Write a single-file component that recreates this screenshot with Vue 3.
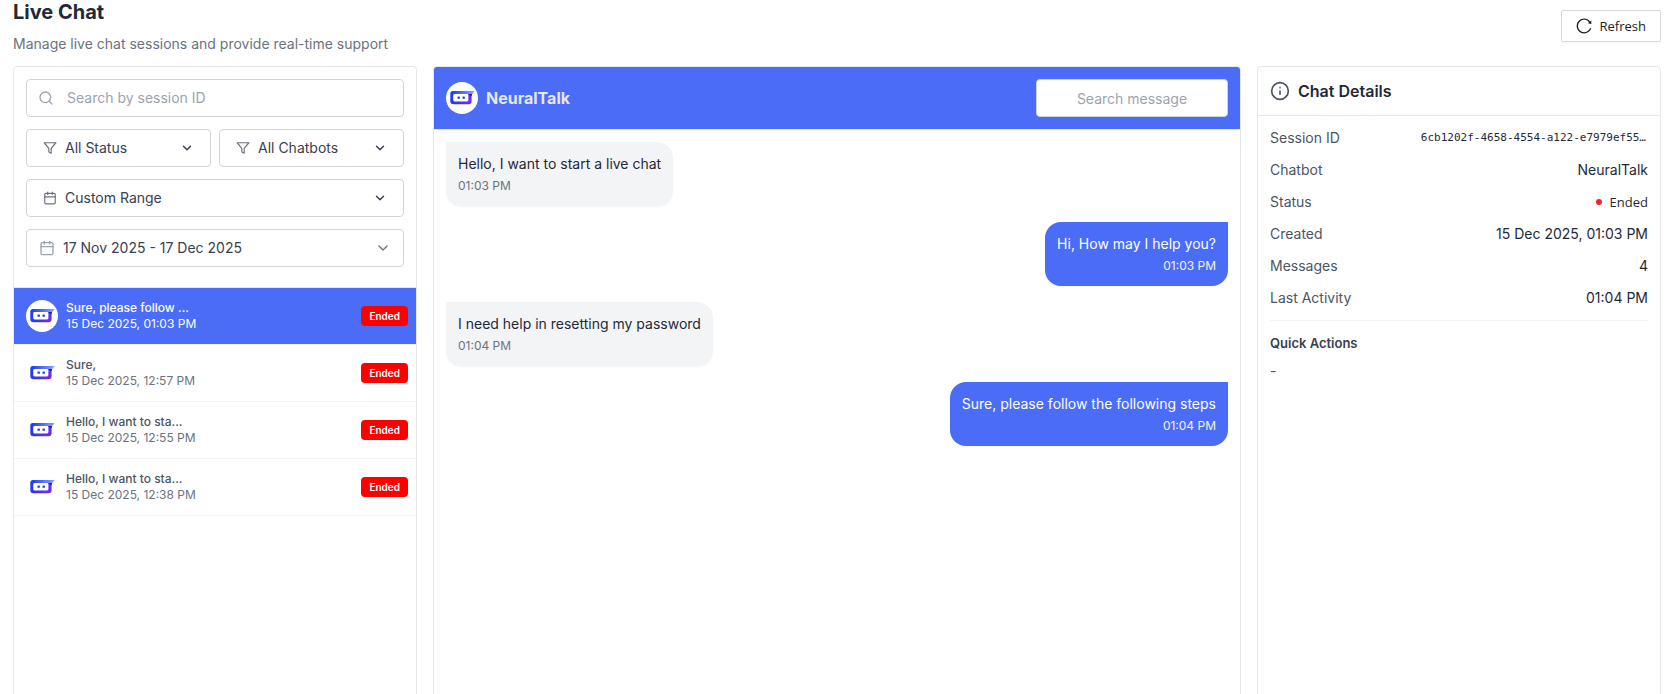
<template>
  <div class="page">
    <header class="page-header">
      <div>
        <h1 class="page-title">Live Chat</h1>
        <p class="page-subtitle">
          Manage live chat sessions and provide real-time support
        </p>
      </div>
      <button type="button" class="refresh-btn">
        <svg width="16" height="16" viewBox="64 64 896 896" fill="currentColor">
          <path
            d="M909.1 209.3l-56.4 44.1C775.8 155.1 656.2 92 521.9 92 290 92 102.3 279.5 102 511.5 101.7 743.7 289.8 932 521.9 932c181.3 0 335.8-115 394.6-276.1 1.5-4.2-.7-8.9-4.9-10.3l-56.7-19.5a8 8 0 00-10.1 4.8c-1.8 5-3.8 10-5.9 14.9-17.3 41-42.1 77.8-73.7 109.4A344.77 344.77 0 01655.9 829c-42.3 17.9-87.4 27-133.8 27-46.5 0-91.5-9.1-133.8-27A341.5 341.5 0 01279 755.2a342.16 342.16 0 01-73.7-109.4c-17.9-42.4-27-87.4-27-133.9s9.1-91.5 27-133.9c17.3-41 42.1-77.8 73.7-109.4 31.6-31.6 68.4-56.4 109.3-73.8 42.3-17.9 87.4-27 133.8-27 46.5 0 91.5 9.1 133.8 27a341.5 341.5 0 01109.3 73.8c9.9 9.9 19.2 20.4 27.8 31.4l-60.2 47a8 8 0 003 14.1l175.6 43c5 1.2 9.9-2.6 9.9-7.7l.8-180.9c-.1-6.6-7.8-10.3-13-6.2z"
          />
        </svg>
        Refresh
      </button>
    </header>

    <!-- Shared bot logo -->
    <svg class="defs" width="0" height="0" aria-hidden="true">
      <defs>
        <linearGradient id="bot-body" x1="0" y1="0" x2="1" y2="0.4">
          <stop offset="0" stop-color="#1a3cf5" />
          <stop offset="0.6" stop-color="#3a35e8" />
          <stop offset="1" stop-color="#6a2cf0" />
        </linearGradient>
        <linearGradient id="bot-top" x1="0" y1="0" x2="1" y2="0">
          <stop offset="0" stop-color="#1a3cf5" />
          <stop offset="1" stop-color="#86a4ff" />
        </linearGradient>
        <symbol id="bot-logo" viewBox="0 0 32 32">
          <path
            fill="url(#bot-body)"
            fill-rule="evenodd"
            d="M7 9.1H25.6V19a3.2 3.2 0 0 1-3.2 3.2H7.5a3.2 3.2 0 0 1-3.2-3.2V11.9A2.8 2.8 0 0 1 7 9.1ZM8.6 12a1.4 1.4 0 0 0-1.4 1.4V18a1.4 1.4 0 0 0 1.4 1.4H21a1.4 1.4 0 0 0 1.4-1.4V12Z"
          />
          <path fill="url(#bot-top)" d="M7 9.1H28.6L26.4 12H5.2A2.8 2.8 0 0 1 7 9.1Z" />
          <path fill="#2a1b9a" d="M22.4 12H26L25.6 14L22.4 12.8Z" />
          <rect x="11.5" y="14.4" width="2.4" height="2.4" rx="0.6" fill="#2438ee" />
          <rect x="16.5" y="14.4" width="2.4" height="2.4" rx="0.6" fill="#2438ee" />
        </symbol>
      </defs>
    </svg>

    <main class="columns">
      <section class="panel">
        <div class="filters">
          <label class="field search-field">
            <svg class="icon muted" width="16" height="16" viewBox="0 0 24 24">
              <circle cx="11" cy="11" r="8" />
              <path d="M21 21l-4.35-4.35" />
            </svg>
            <input
              v-model="sessionQuery"
              class="search-input"
              type="text"
              aria-label="Search by session ID"
              placeholder="Search by session ID"
            />
          </label>

          <div class="filter-row">
            <label class="field select-field">
              <svg class="icon" width="14" height="14" viewBox="0 0 24 24">
                <path d="M22 3H2l8 9.46V19l4 2v-8.54L22 3z" />
              </svg>
              <select v-model="status" aria-label="Status">
                <option>All Status</option>
                <option>Active</option>
                <option>Ended</option>
              </select>
              <svg class="icon dark" width="14" height="14" viewBox="0 0 24 24">
                <path d="M6 9l6 6 6-6" />
              </svg>
            </label>
            <label class="field select-field">
              <svg class="icon" width="14" height="14" viewBox="0 0 24 24">
                <path d="M22 3H2l8 9.46V19l4 2v-8.54L22 3z" />
              </svg>
              <select v-model="chatbot" aria-label="Chatbot">
                <option>All Chatbots</option>
                <option>NeuralTalk</option>
              </select>
              <svg class="icon dark" width="14" height="14" viewBox="0 0 24 24">
                <path d="M6 9l6 6 6-6" />
              </svg>
            </label>
          </div>

          <label class="field select-field">
            <svg class="icon" width="14" height="14" viewBox="0 0 24 24">
              <rect x="3" y="4" width="18" height="18" rx="2" />
              <path d="M16 2v4M8 2v4M3 10h18" />
            </svg>
            <select v-model="range" aria-label="Date range">
              <option>Custom Range</option>
              <option>Today</option>
            </select>
            <svg class="icon dark" width="14" height="14" viewBox="0 0 24 24">
              <path d="M6 9l6 6 6-6" />
            </svg>
          </label>

          <button type="button" class="field date-field">
            <svg class="icon muted" width="16" height="16" viewBox="0 0 24 24">
              <rect x="3" y="4" width="18" height="18" rx="2" />
              <path d="M16 2v4M8 2v4M3 10h18" />
            </svg>
            <span class="date-text">17 Nov 2025 - 17 Dec 2025</span>
            <svg class="icon" width="16" height="16" viewBox="0 0 24 24">
              <path d="M6 9l6 6 6-6" />
            </svg>
          </button>
        </div>

        <ul class="sessions">
          <li v-for="(session, index) in sessions" :key="session.date">
            <button
              type="button"
              class="session"
              :class="{ active: index === selected }"
              @click="selected = index"
            >
              <span class="avatar">
                <svg width="32" height="32"><use href="#bot-logo" /></svg>
              </span>
              <span class="session-text">
                <span class="session-title">{{ session.title }}</span>
                <span class="session-date">{{ session.date }}</span>
              </span>
              <span class="badge">Ended</span>
            </button>
          </li>
        </ul>
      </section>

      <section class="panel">
        <div class="chat-header">
          <span class="avatar">
            <svg width="32" height="32"><use href="#bot-logo" /></svg>
          </span>
          <h2 class="chat-name">NeuralTalk</h2>
          <input
            v-model="messageQuery"
            class="message-search"
            type="text"
            aria-label="Search message"
            placeholder="Search message"
          />
        </div>
        <div class="messages">
          <div
            v-for="message in messages"
            :key="message.text"
            class="bubble"
            :class="{ mine: message.mine }"
          >
            <p class="bubble-text">{{ message.text }}</p>
            <p class="bubble-time">{{ message.time }}</p>
          </div>
        </div>
      </section>

      <section class="panel">
        <div class="details-header">
          <svg class="icon info" width="20" height="20" viewBox="0 0 24 24">
            <circle cx="12" cy="12" r="10" />
            <path d="M12 16v-4M12 8h.01" />
          </svg>
          <h2 class="details-title">Chat Details</h2>
        </div>
        <div class="details-body">
          <dl class="details">
            <div v-for="item in details" :key="item.label" class="detail">
              <dt>{{ item.label }}</dt>
              <dd :class="item.kind">{{ item.value }}</dd>
            </div>
          </dl>
          <h3 class="actions-title">Quick Actions</h3>
          <p class="actions-empty">-</p>
        </div>
      </section>
    </main>
  </div>
</template>

<script setup>
import { ref } from "vue";

const sessionQuery = ref("");
const messageQuery = ref("");
const status = ref("All Status");
const chatbot = ref("All Chatbots");
const range = ref("Custom Range");
const selected = ref(0);

const sessions = [
  { title: "Sure, please follow ...", date: "15 Dec 2025, 01:03 PM" },
  { title: "Sure,", date: "15 Dec 2025, 12:57 PM" },
  { title: "Hello, I want to sta...", date: "15 Dec 2025, 12:55 PM" },
  { title: "Hello, I want to sta...", date: "15 Dec 2025, 12:38 PM" },
];

const messages = [
  { text: "Hello, I want to start a live chat", time: "01:03 PM" },
  { text: "Hi, How may I help you?", time: "01:03 PM", mine: true },
  { text: "I need help in resetting my password", time: "01:04 PM" },
  {
    text: "Sure, please follow the following steps",
    time: "01:04 PM",
    mine: true,
  },
];

const details = [
  {
    label: "Session ID",
    value: "6cb1202f-4658-4554-a122-e7979ef55…",
    kind: "mono",
  },
  { label: "Chatbot", value: "NeuralTalk" },
  { label: "Status", value: "Ended", kind: "status" },
  { label: "Created", value: "15 Dec 2025, 01:03 PM" },
  { label: "Messages", value: "4" },
  { label: "Last Activity", value: "01:04 PM" },
];
</script>

<style>
body {
  background: #fff;
}
</style>

<style scoped>
.page,
.page * {
  box-sizing: border-box;
}

.page {
  height: 100vh;
  overflow: hidden;
  padding: 0 14px 0 13px;
  font-family: Inter, sans-serif;
  font-size: 14px;
  line-height: 20px;
  color: #1f2937;
}

h1,
h2,
h3,
p,
ul,
dl,
dd {
  margin: 0;
  padding: 0;
}

button,
input,
select {
  font: inherit;
  color: inherit;
}

.defs {
  display: block;
}

/* Header */
.page-header {
  display: flex;
  justify-content: space-between;
  height: 66px;
}

.page-title {
  font-size: 20px;
  line-height: 24px;
  font-weight: 700;
}

.page-subtitle {
  margin-top: 10px;
  color: #6b7280;
}

.refresh-btn {
  display: flex;
  align-items: center;
  gap: 8px;
  height: 32px;
  margin-top: 10px;
  padding: 0 14px;
  border: 1px solid #d9d9d9;
  border-radius: 2px;
  background: #fff;
  box-shadow: 0 2px 0 rgba(0, 0, 0, 0.02);
  font-family: "Open Sans", sans-serif;
  font-size: 13px;
  color: #222;
  cursor: pointer;
}

.columns {
  display: grid;
  grid-template-columns: 1fr 2fr 1fr;
  gap: 16px;
}

.panel {
  min-width: 0;
  min-height: 100vh;
  overflow: hidden;
  border: 1px solid #e5e7eb;
  border-radius: 4px;
  background: #fff;
}

.icon {
  flex: none;
  fill: none;
  stroke: #6b7280;
  stroke-width: 2;
  stroke-linecap: round;
  stroke-linejoin: round;
}

.icon.muted {
  stroke: #9ca3af;
}

.icon.dark {
  stroke: #374151;
  stroke-width: 2.5;
}

.icon.info {
  stroke: #4b5563;
}

/* Filters */
.filters {
  display: flex;
  flex-direction: column;
  gap: 12px;
  padding: 12px 12px 20px;
}

.filter-row {
  display: grid;
  grid-template-columns: 1fr 1fr;
  gap: 8px;
}

.field {
  display: flex;
  align-items: center;
  gap: 8px;
  min-width: 0;
  height: 38px;
  padding: 0 12px;
  border: 1px solid #d1d5db;
  border-radius: 4px;
  background: #fff;
  color: #374151;
}

.search-field {
  gap: 13px;
  padding-left: 11px;
}

.select-field {
  padding: 0 16px;
}

.field select {
  flex: 1;
  min-width: 0;
  padding: 0;
  border: 0;
  outline: 0;
  appearance: none;
  background: transparent;
  cursor: pointer;
}

.search-input {
  flex: 1;
  min-width: 0;
  padding: 0;
  border: 0;
  outline: 0;
  background: transparent;
}

input::placeholder {
  color: #9ca3af;
  opacity: 1;
}

.date-field {
  width: 100%;
  text-align: left;
  cursor: pointer;
}

.date-text {
  flex: 1;
}

/* Session list */
.sessions {
  list-style: none;
  border-top: 1px solid #e5e7eb;
}

.sessions li {
  border-bottom: 1px solid #f3f4f6;
}

.session {
  display: flex;
  align-items: center;
  gap: 8px;
  width: 100%;
  padding: 12px 8px 12px 12px;
  border: 0;
  background: transparent;
  font-size: 12px;
  line-height: 16px;
  text-align: left;
  cursor: pointer;
}

.session-text {
  flex: 1;
  display: flex;
  flex-direction: column;
}

.session-title {
  font-weight: 500;
  color: #4b5563;
}

.session-date {
  color: #6b7280;
}

.session.active {
  background: #4a6cf7;
}

.session.active .session-title,
.session.active .session-date {
  color: #fff;
}

.avatar {
  flex: none;
  display: flex;
  width: 32px;
  height: 32px;
  border-radius: 50%;
  background: #fff;
}

.badge {
  padding: 2px 8px;
  border-radius: 4px;
  background: #ff0000;
  color: #fff;
  font-size: 10px;
  font-weight: 600;
}

/* Conversation */
.chat-header {
  display: flex;
  align-items: center;
  gap: 8px;
  padding: 12px;
  border-bottom: 1px solid #e5e7eb;
  background: #4a6cf7;
  background-clip: padding-box;
}

.chat-name {
  flex: 1;
  font-size: 16px;
  font-weight: 700;
  color: #e5e7eb;
}

.message-search {
  width: 192px;
  height: 38px;
  padding: 0 12px;
  border: 1px solid #d1d5db;
  border-radius: 4px;
  outline: 0;
  background: #fff;
  text-align: center;
}

.messages {
  display: flex;
  flex-direction: column;
  align-items: flex-start;
  gap: 16px;
  padding: 12px;
}

.bubble {
  max-width: 70%;
  padding: 12px;
  border-radius: 0 16px 16px 16px;
  background: #f3f4f6;
  box-shadow: 0 1px 2px rgba(0, 0, 0, 0.05);
}

.bubble-time {
  margin-top: 4px;
  font-size: 12px;
  line-height: 16px;
  color: #6b7280;
}

.bubble.mine {
  align-self: flex-end;
  border-radius: 16px 0 16px 16px;
  background: #4a6cf7;
  color: #fff;
  text-align: right;
}

.bubble.mine .bubble-time {
  color: #f3f4f6;
}

/* Details */
.details-header {
  display: flex;
  align-items: center;
  gap: 8px;
  height: 49px;
  padding: 0 12px;
  border-bottom: 1px solid #e5e7eb;
}

.details-title {
  font-size: 16px;
  font-weight: 600;
}

.details-body {
  padding: 12px;
}

.details {
  display: flex;
  flex-direction: column;
  gap: 12px;
  padding-bottom: 12px;
  border-bottom: 1px solid #f3f4f6;
}

.detail {
  display: flex;
  justify-content: space-between;
  gap: 8px;
}

.detail dt {
  color: #4b5563;
}

.detail .mono {
  padding-right: 2px;
  font-family: "DejaVu Sans Mono", monospace;
  font-size: 11px;
}

.detail .status {
  display: flex;
  align-items: center;
  gap: 8px;
  font-family: "Open Sans", sans-serif;
  font-size: 13px;
}

.status::before {
  content: "";
  width: 6px;
  height: 6px;
  border-radius: 50%;
  background: #f5222d;
}

.actions-title {
  margin-top: 12px;
  font-size: 13px;
  font-weight: 600;
  color: #374151;
}

.actions-empty {
  margin-top: 8px;
  color: #4b5563;
}
</style>
